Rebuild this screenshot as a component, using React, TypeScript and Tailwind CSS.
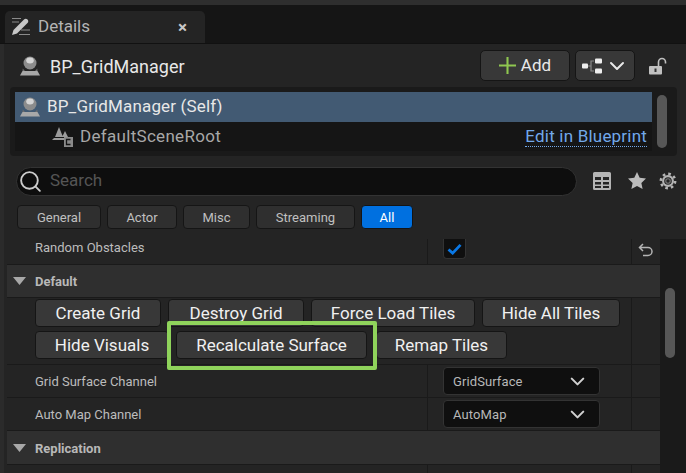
import React from 'react';
import { ChevronDown, Search } from 'lucide-react';

const BlueprintIcon = ({ className }: { className?: string }) => (
  <svg viewBox="0 0 20 20" className={className}>
    <circle cx="10" cy="7" r="6.500" fill="#8c8c8c" />
    <ellipse cx="10" cy="4.500" rx="3.800" ry="3" fill="#d4d4d4" />
    <path d="M2.800 12.500A8.500 8.500 0 0 0 17.200 12.500L17.500 15H2.500z" fill="#6e6e6e" />
    <path d="M2.500 15h15l2.500 4.500H0z" fill="#a8a8a8" />
  </svg>
);

const Chip = ({ label, width, active }: { label: string; width: string; active?: boolean }) => (
  <div
    className={`${width} h-[24px] flex items-center justify-center rounded-[4px] border pt-[1px] text-[13px] ${
      active ? 'bg-[#0070e0] border-[#151515] text-white' : 'bg-[#2f2f2f] border-[#151515] text-[#c0c0c0]'
    }`}
  >
    {label}
  </div>
);

const ActionButton = ({ label, width }: { label: string; width: string }) => (
  <div className={`${width} h-[28px] shrink-0 flex items-center justify-center rounded-[4px] border border-[#151515] bg-[#383838] pt-[2px] text-[17px] text-[#f0f0f0]`}>
    {label}
  </div>
);

const Category = ({ label, height }: { label: string; height: string }) => (
  <div className={`${height} flex items-center bg-[#2f2f2f] border-b border-[#1a1a1a]`}>
    <svg viewBox="0 0 13 8" className="w-[13px] h-[8px] ml-[6px] mr-[9px]">
      <path d="M0 0h13L6.500 8z" fill="#a8a8a8" />
    </svg>
    <span className="pt-[2px] text-[13px] font-bold text-[#b8b8b8]">{label}</span>
  </div>
);

const Cells = ({ label, children, height }: { label: string; children?: React.ReactNode; height: string }) => (
  <div className={`${height} flex border-b border-[#1a1a1a]`}>
    <div className="w-[421px] shrink-0 flex items-center pl-[28px] pt-[2px] text-[13px] text-[#bcbcbc] border-r border-[#1a1a1a]">{label}</div>
    <div className="w-[204px] shrink-0 flex items-center pl-[15px] border-r border-[#1a1a1a]">{children}</div>
    <div className="flex-1" />
  </div>
);

const Dropdown = ({ label }: { label: string }) => (
  <div className="w-[157px] h-[28px] flex items-center justify-between pl-[9px] pr-[10px] rounded-[4px] border border-[#333] bg-[#0f0f0f] text-[13px] tracking-[0.1px] text-[#b8b8b8]">
    <span className="pt-[1px]">{label}</span>
    <ChevronDown size={23} strokeWidth={2.2} className="text-[#d0d0d0]" />
  </div>
);

export default function App() {
  return (
    <div className="w-[686px] h-[473px] overflow-hidden bg-[#242424] font-['Roboto',sans-serif] flex flex-col">
      <div className="h-[5px] shrink-0 bg-[#2e2e2e]" />

      <div className="h-[39px] shrink-0 bg-[#151515] pt-[6px] pl-[5px] border-b border-[#111]">
        <div className="w-[200px] h-[32px] rounded-t-[5px] bg-[#242424] flex items-center pl-[6px] pr-[18px]">
          <svg viewBox="0 0 20 20" className="w-[20px] h-[20px]">
            <path d="M1 1.500h9M1 5h7M10 13h9M8 17.500h11" stroke="#8a8a8a" strokeWidth="1" fill="none" />
            <path d="M1 18l1.500-5L13 2.500c1-1 2.500-1 3.500 0s1 2.500 0 3.500L6 16.500z" fill="#c8c8c8" />
          </svg>
          <span className="ml-[7px] flex-1 text-[17px] text-[#b4b4b4]">Details</span>
          <span className="text-[17px] font-bold text-[#c8c8c8] leading-none">×</span>
        </div>
      </div>

      <div className="flex-1 min-h-0 flex flex-col border-l-[4px] border-[#2b2b2b]">
        <div className="h-[43px] shrink-0 flex items-center pl-[16px] pr-[19px]">
          <BlueprintIcon className="w-[20px] h-[20px]" />
          <span className="ml-[10px] flex-1 pt-[2px] text-[18px] text-[#e8e8e8]">BP_GridManager</span>
          <div className="w-[90px] h-[31px] flex items-center justify-center gap-[5px] rounded-[5px] border border-[#151515] bg-[#383838] text-[17px] text-[#e8e8e8]">
            <svg viewBox="0 0 18 18" className="w-[17px] h-[17px]">
              <path d="M9 0v18M0 9h18" stroke="#8fc750" strokeWidth="2.200" />
            </svg>
            <span className="pt-[1px]">Add</span>
          </div>
          <div className="ml-[5px] w-[60px] h-[31px] flex items-center justify-center gap-[3px] rounded-[5px] border border-[#151515] bg-[#383838]">
            <svg viewBox="0 0 20 16" className="w-[20px] h-[16px]">
              <path d="M6 8h3M9 8V3h3M9 8v5h3" stroke="#8a8a8a" strokeWidth="1.200" fill="none" />
              <rect x="0" y="5.500" width="6" height="5" rx="1" fill="#eee" />
              <rect x="13" y="0.500" width="7" height="5" rx="1" fill="#eee" />
              <rect x="13" y="10.500" width="7" height="5" rx="1" fill="#eee" />
            </svg>
            <ChevronDown size={24} strokeWidth={2} className="text-[#e8e8e8]" />
          </div>
          <svg viewBox="0 0 18 18" className="ml-[14px] w-[18px] h-[18px]">
            <path d="M9.500 9V5a3.500 3.500 0 0 1 7 0v1.500" stroke="#c0c0c0" strokeWidth="1.600" fill="none" />
            <rect x="0" y="9" width="13" height="8.500" rx="1" fill="#c0c0c0" />
            <rect x="5.500" y="11.500" width="2" height="3.500" fill="#333" />
          </svg>
        </div>

        <div className="ml-[6px] w-[667px] h-[69px] shrink-0 rounded-[4px] bg-[#1a1a1a] flex pt-[5px] pl-[5px]">
          <div className="w-[637px] h-[59px] bg-[#151515]">
            <div className="h-[30px] bg-[#425a73] flex items-center pl-[5px]">
              <BlueprintIcon className="w-[20px] h-[20px]" />
              <span className="ml-[7px] text-[17px] tracking-[0.15px] text-[#e8e8e8]">BP_GridManager (Self)</span>
            </div>
            <div className="h-[29px] flex items-center pl-[37px] pr-[5px]">
              <svg viewBox="0 0 21 20" className="w-[21px] h-[20px]">
                <path d="M7 0l4 10H3zM13 4l3 6h-6zM2 11h10v2H0z" fill="#9a9a9a" />
                <rect x="12" y="10" width="9" height="10" fill="#8a8a8a" />
                <path d="M18.500 12.500H14.500v5h4" stroke="#151515" strokeWidth="1.300" fill="none" />
              </svg>
              <span className="ml-[7px] flex-1 pt-[1px] text-[17px] tracking-[0.3px] text-[#a8a8a8]">DefaultSceneRoot</span>
              <span className="text-[17px] tracking-[0.2px] leading-[19px] text-[#72a8ea] border-b border-dotted border-[#72a8ea]">Edit in Blueprint</span>
            </div>
          </div>
          <div className="ml-[5px] mt-[3px] w-[10px] h-[53px] rounded-full bg-[#575757]" />
        </div>

        <div className="h-[49px] shrink-0 flex items-center pl-[12px] pt-[1px]">
          <div className="w-[561px] h-[29px] flex items-center rounded-full border border-[#333] bg-[#0e0e0e] pl-[1px]">
            <Search size={25} strokeWidth={1.8} className="text-[#cccccc]" />
            <span className="ml-[7px] pb-[1px] text-[17px] text-[#555]">Search</span>
          </div>
          <svg viewBox="0 0 18 18" className="ml-[16px] w-[18px] h-[18px]">
            <path fillRule="evenodd" d="M1.500 0h15A1.500 1.500 0 0 1 18 1.500v15a1.500 1.500 0 0 1-1.500 1.500h-15A1.500 1.500 0 0 1 0 16.500v-15A1.500 1.500 0 0 1 1.500 0zM2 5v3h6V5zm8 0v3h6V5zM2 10v2.500h6V10zm8 0v2.500h6V10zM2 14v2h6v-2zm8 0v2h6v-2z" fill="#b4b4b4" />
          </svg>
          <svg viewBox="0 0 24 24" className="ml-[17px] w-[18px] h-[18px]">
            <path d="M12 0l3.600 7.800 8.400 1-6.200 5.700 1.700 8.300-7.500-4.200-7.500 4.200 1.700-8.300L0 8.800l8.400-1z" fill="#bcbcbc" />
          </svg>
          <svg viewBox="0 0 24 24" className="ml-[13px] w-[18px] h-[18px]">
            <circle cx="12" cy="12" r="6.500" fill="none" stroke="#b4b4b4" strokeWidth="2.800" />
            <circle cx="12" cy="12" r="9.500" fill="none" stroke="#b4b4b4" strokeWidth="3.500" strokeDasharray="3.500 3.960" />
            <circle cx="12" cy="12" r="3" fill="none" stroke="#777" strokeWidth="1.500" />
          </svg>
        </div>

        <div className="h-[24px] shrink-0 flex gap-[6px] pl-[13px]">
          <Chip label="General" width="w-[84px]" />
          <Chip label="Actor" width="w-[70px]" />
          <Chip label="Misc" width="w-[67px]" />
          <Chip label="Streaming" width="w-[99px]" />
          <Chip label="All" width="w-[52px]" active />
        </div>

        <div className="relative flex-1 min-h-0 overflow-hidden flex mt-[10px] pl-[3px]">
          <div className="w-[653px] shrink-0">
            <div className="h-[26px] flex border-b border-[#1a1a1a]">
              <div className="w-[421px] shrink-0 flex items-center pl-[28px] pb-[8px] text-[13px] text-[#bcbcbc] border-r border-[#1a1a1a]">Random Obstacles</div>
              <div className="w-[204px] shrink-0 pl-[15px] border-r border-[#1a1a1a]">
                <div className="w-[23px] h-[20px] rounded-b-[4px] border border-t-0 border-[#333] bg-[#0f0f0f] flex items-center justify-center">
                  <svg viewBox="0 0 16 13" className="w-[15px] h-[12px]">
                    <path d="M1.500 7l4.500 4 8.500-9" stroke="#0a78e6" strokeWidth="3" fill="none" />
                  </svg>
                </div>
              </div>
              <div className="flex-1 flex items-center justify-center pb-[4px]">
                <svg viewBox="0 0 16 14" className="w-[16px] h-[14px]">
                  <path d="M5 1L1.500 4.500 5 8M1.500 4.500H10a4 4 0 0 1 0 8H5" stroke="#b4b4b4" strokeWidth="1.500" fill="none" />
                </svg>
              </div>
            </div>

            <Category label="Default" height="h-[33px]" />

            <div className="h-[67px] flex border-b border-[#1a1a1a]">
              <div className="w-[625px] shrink-0 border-r border-[#1a1a1a] pl-[28px] pt-[1px]">
                <div className="flex gap-[7px]">
                  <ActionButton label="Create Grid" width="w-[126px]" />
                  <ActionButton label="Destroy Grid" width="w-[136px]" />
                  <ActionButton label="Force Load Tiles" width="w-[164px]" />
                  <ActionButton label="Hide All Tiles" width="w-[138px]" />
                </div>
                <div className="flex mt-[4px]">
                  <ActionButton label="Hide Visuals" width="w-[134px]" />
                  <div className="ml-[7px]">
                    <ActionButton label="Recalculate Surface" width="w-[191px]" />
                  </div>
                  <div className="ml-[9px]">
                    <ActionButton label="Remap Tiles" width="w-[131px]" />
                  </div>
                </div>
              </div>
            </div>

            <Cells label="Grid Surface Channel" height="h-[33px]"><Dropdown label="GridSurface" /></Cells>
            <Cells label="Auto Map Channel" height="h-[33px]"><Dropdown label="AutoMap" /></Cells>
            <Category label="Replication" height="h-[34px]" />
            <Cells label="" height="h-[9px]" />
          </div>

          <div className="flex-1 bg-[#1a1a1a] pl-[5px] pt-[49px]">
            <div className="w-[10px] h-[70px] rounded-full bg-[#575757]" />
          </div>

          {/* green callout round the Recalculate button */}
          <div className="absolute left-[163px] top-[82px] w-[210px] h-[49px] border-[4px] border-[#8fd35b] rounded-[2px]" />
        </div>
      </div>
    </div>
  );
}
